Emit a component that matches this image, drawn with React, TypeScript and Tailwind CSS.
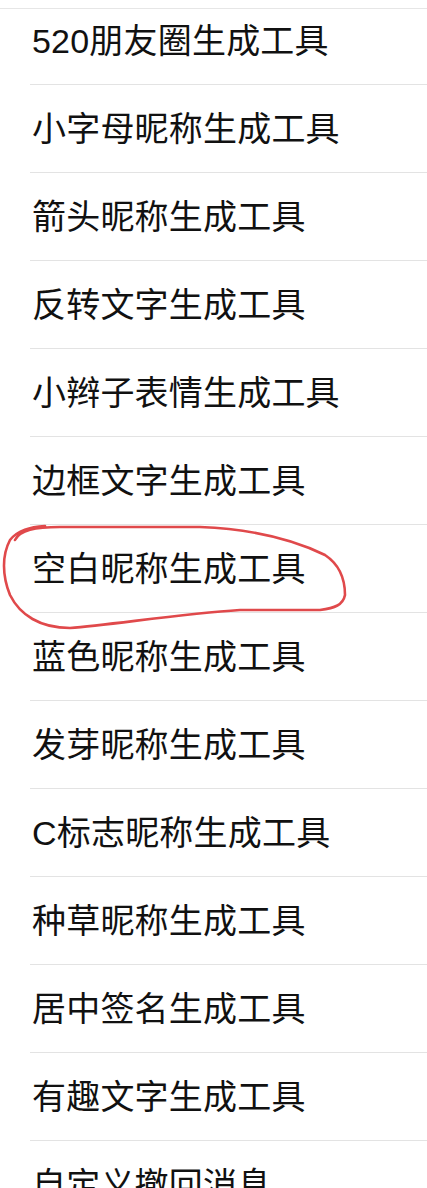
const items = [
  "520朋友圈生成工具",
  "小字母昵称生成工具",
  "箭头昵称生成工具",
  "反转文字生成工具",
  "小辫子表情生成工具",
  "边框文字生成工具",
  "空白昵称生成工具",
  "蓝色昵称生成工具",
  "发芽昵称生成工具",
  "C标志昵称生成工具",
  "种草昵称生成工具",
  "居中签名生成工具",
  "有趣文字生成工具",
  "自定义撤回消息",
];

export default function App() {
  return (
    <div
      className="relative w-[427px] h-[1188px] overflow-hidden bg-white text-[#111]"
      style={{ fontFamily: '"Liberation Sans", "Noto Sans CJK SC", sans-serif' }}
    >
      <div className="h-[9px] border-b border-[#e6e6e6]" />
      <ul>
        {items.map((name, i) => (
          <li
            key={name}
            className={`ml-[30px] flex items-center border-b border-[#e3e3e3] text-[34px] leading-none tracking-[0.2px] ${
              i === 0 ? "h-[76px] pb-[12px]" : "h-[88px]"
            }`}
          >
            <span className="ml-[2px]">{name}</span>
          </li>
        ))}
      </ul>

      {/* hand-drawn red circle around the highlighted item */}
      <svg className="pointer-events-none absolute left-0 top-0" width="427" height="1188" fill="none">
        <path
          d="M 15 540 C 20 530, 35 527, 60 527 L 200 527 C 250 529, 290 538, 325 555 C 340 565, 345 580, 345 595 C 343 605, 335 608, 320 610 L 240 610 C 180 614, 110 625, 70 628 C 40 628, 20 615, 10 595 C 2 575, 2 555, 10 540 C 18 530, 30 527, 45 526"
          stroke="#e0494b"
          strokeWidth="2.6"
          strokeLinecap="round"
          strokeLinejoin="round"
        />
      </svg>
    </div>
  );
}
